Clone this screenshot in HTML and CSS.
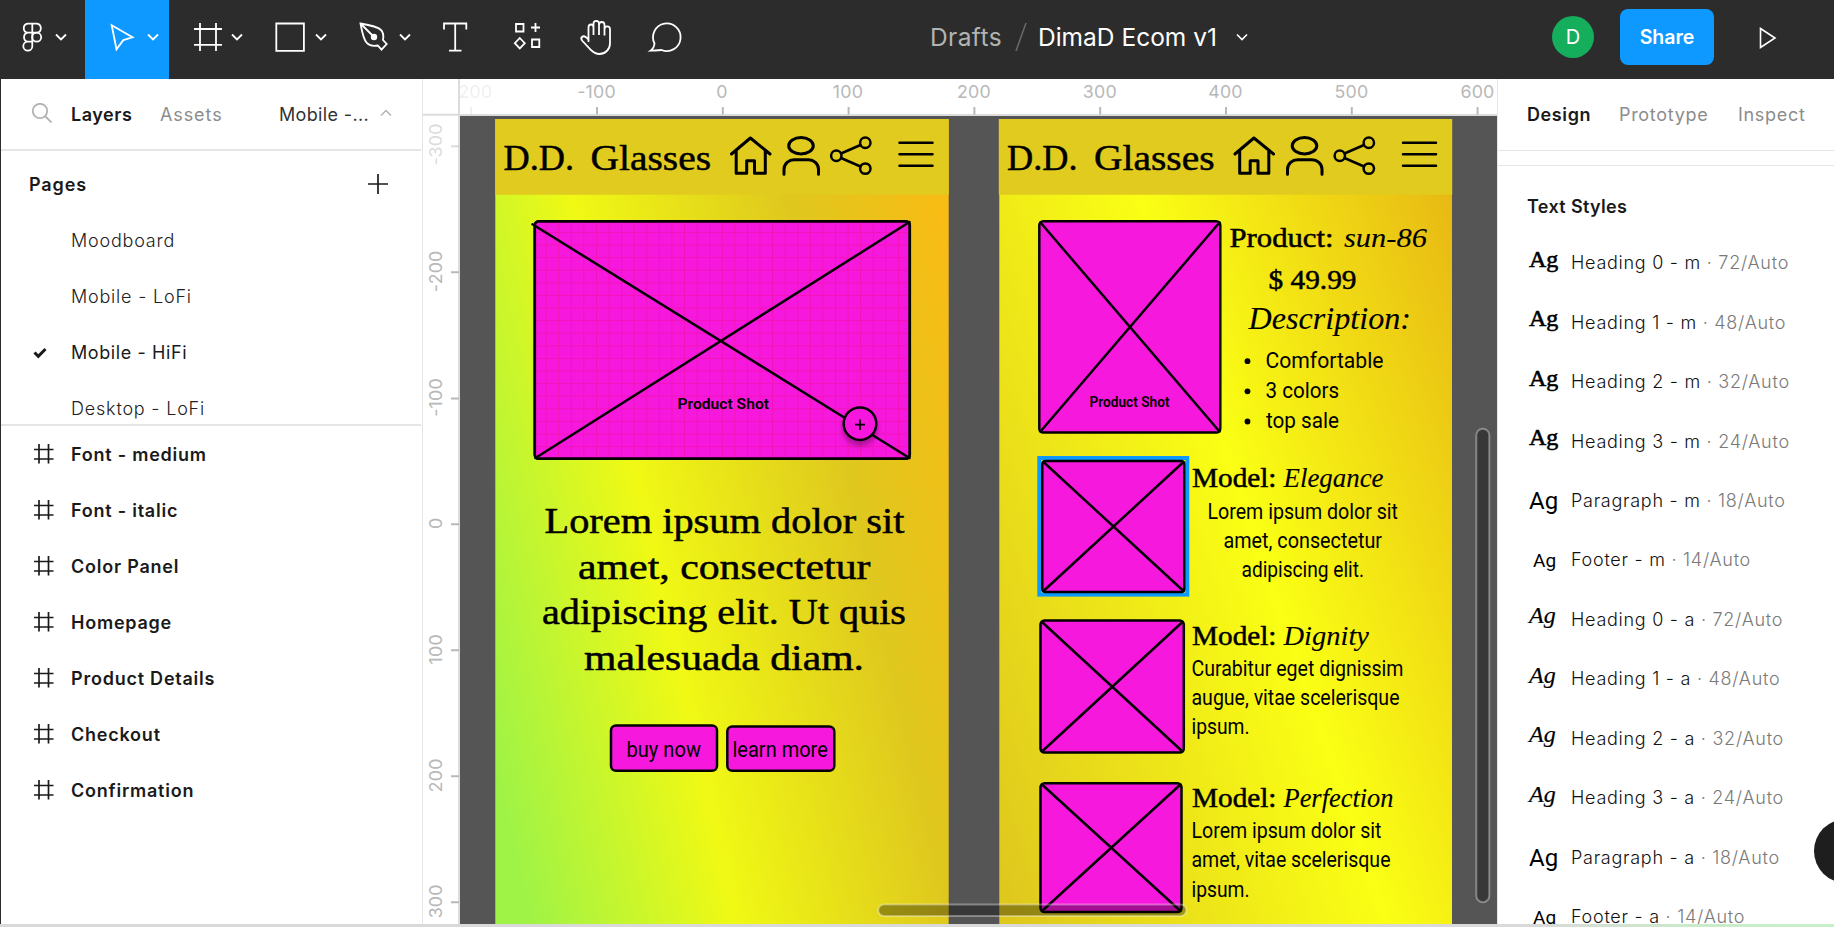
FILE: index.html
```html
<!DOCTYPE html>
<html lang="en">
<head>
<meta charset="utf-8">
<title>DimaD Ecom v1</title>
<link rel="stylesheet" href="styles.css">
</head>
<body>
<div class="app">
  <header class="toolbar">
    <button class="tool w85"><svg viewBox="0 0 85 79"><path d="M32.3 23.6h-4.6a4.6 4.6 0 0 0 0 9.1h4.6zM32.3 23.6h4.6a4.6 4.6 0 0 1 0 9.1h-4.6M32.3 32.7h-4.6a4.6 4.6 0 0 0 0 9h4.6zM32.3 41.7h-4.6a4.5 4.5 0 1 0 4.6 4.5z"/><circle cx="36.7" cy="37.2" r="4.5"/><path d="m56 34.500 5 5 5-5"/></svg></button>
    <button class="tool w84 active"><svg viewBox="85 0 84 79"><path d="m111.700 25.300 20.800 12-9.200 2.800-6.800 9.200z"/><path d="m148 34.500 5 5 5-5"/></svg></button>
    <button class="tool w84"><svg viewBox="169 0 84 79"><path d="M194 29h28M194 44.800h28M200 23v28M216 23v28"/><path d="m232 34.500 5 5 5-5"/></svg></button>
    <button class="tool w84"><svg viewBox="253 0 84 79"><path d="M276.300 23.500h27.600v27.400h-27.600z"/><path d="m316 34.500 5 5 5-5"/></svg></button>
    <button class="tool w84"><svg viewBox="337 0 84 79"><path d="M360.500 23.500c9 1.500 17.500 3.500 20.500 6.500 2.300 2.300 2.800 5.500 2 10l3.700 4-5.200 5.700-3.700-4.200c-5 1-8.300.2-10.800-2.300-3-3-5-11-6.500-19.700zM361 24l12 12"/><circle cx="374" cy="37" r="2.300" class="solid"/><path d="m400 34.500 5 5 5-5"/></svg></button>
    <button class="tool w69"><svg viewBox="421 0 69 79"><path d="M444 29.500v-6h22.300v6M455.200 23.500v27M449 50.700h12.500"/></svg></button>
    <button class="tool w72"><svg viewBox="490 0 72 79"><path d="M516 24h7.500v7.500H516zM535.500 23v9M531 27.500h9M532 39.500h7.300V47H532zM519.800 38l5 5.200-5 5.200-5-5.200z"/></svg></button>
    <button class="tool w69"><svg viewBox="562 0 69 79"><path d="M588.500 42V27.500c0-4 5-4 5 0V35M593.500 35V23.800c0-4 5.500-4 5.500 0V35M599 25c0-4 5.500-4 5.500 0v10.500M604.500 29c0-3.500 5.500-3.500 5.500 0v14.500c0 6-5 10.500-10.500 10.500-4 0-6-1.500-8.500-4l-8.500-9c-3-3.500.5-6 3.500-3.800l2.500 2.300"/></svg></button>
    <button class="tool w70"><svg viewBox="631 0 70 79"><path d="M654.500 43.500a13.800 13.800 0 1 1 7 6.500c-3.500.300-7 .6-11 .7 2.500-1.700 3.700-4.200 4-7.200z"/></svg></button>
    <div class="title"><span class="drafts">Drafts</span><svg class="slash" viewBox="0 0 14 30"><path d="M12 1 2 29"/></svg><span class="file">DimaD Ecom v1</span><svg class="chev" viewBox="0 0 12 8"><path d="m1 1.500 5 5 5-5"/></svg></div>
    <div class="avatar">D</div>
    <button class="share">Share</button>
    <svg class="play" viewBox="0 0 18 22"><path d="M1.500 1.500 16 11 1.500 20.500z"/></svg>
  </header>

  <div class="work">
    <aside class="left">
      <div class="tabs">
        <svg class="search" viewBox="0 0 20 20"><circle cx="8" cy="8" r="7.200"/><path d="m13 13 6.500 6.500"/></svg>
        <b class="t-layers">Layers</b><span class="t-assets">Assets</span><span class="t-page">Mobile -...</span>
        <svg class="up" viewBox="0 0 12 8"><path d="m1 6.500 5-5 5 5"/></svg>
      </div>
      <section class="pages">
        <div class="row head"><b>Pages</b><svg class="plus" viewBox="0 0 20 20"><path d="M0 10h20M10 0v20"/></svg></div>
        <div class="row page">Moodboard</div>
        <div class="row page">Mobile - LoFi</div>
        <div class="row page current"><svg class="check" viewBox="0 0 14 12"><path d="m1.500 5.500 3.800 3.800L12.500 2"/></svg>Mobile - HiFi</div>
        <div class="row page">Desktop - LoFi</div>
      </section>
      <section class="layers">
        <div class="row layer"><svg viewBox="0 0 20 20"><path d="M0 5.500h19.500M0 15h19.500M5 0v19.500M14.500 0v19.500"/></svg>Font - medium</div>
        <div class="row layer"><svg viewBox="0 0 20 20"><path d="M0 5.500h19.500M0 15h19.500M5 0v19.500M14.500 0v19.500"/></svg>Font - italic</div>
        <div class="row layer"><svg viewBox="0 0 20 20"><path d="M0 5.500h19.500M0 15h19.500M5 0v19.500M14.500 0v19.500"/></svg>Color Panel</div>
        <div class="row layer"><svg viewBox="0 0 20 20"><path d="M0 5.500h19.500M0 15h19.500M5 0v19.500M14.500 0v19.500"/></svg>Homepage</div>
        <div class="row layer"><svg viewBox="0 0 20 20"><path d="M0 5.500h19.500M0 15h19.500M5 0v19.500M14.500 0v19.500"/></svg>Product Details</div>
        <div class="row layer"><svg viewBox="0 0 20 20"><path d="M0 5.500h19.500M0 15h19.500M5 0v19.500M14.500 0v19.500"/></svg>Checkout</div>
        <div class="row layer"><svg viewBox="0 0 20 20"><path d="M0 5.500h19.500M0 15h19.500M5 0v19.500M14.500 0v19.500"/></svg>Confirmation</div>
      </section>
    </aside>

    <main class="stage">
      <svg class="ruler-y" viewBox="423 79 37 845">
        <path class="edge" d="M423 114.700h36M459 79v845"/>
        <path class="tick" d="M451 272.300h8M451 398.500h8M451 524.300h8M451 650.300h8M451 776.300h8M451 902.300h8"/>
        <path class="tick faint" d="M451 146.300h8"/>
        <g class="num">
          <text class="faint" transform="translate(442 144.500) rotate(-90)">-300</text>
          <text transform="translate(442 271.300) rotate(-90)">-200</text>
          <text transform="translate(442 397.500) rotate(-90)">-100</text>
          <text transform="translate(442 523.300) rotate(-90)">0</text>
          <text transform="translate(442 649.300) rotate(-90)">100</text>
          <text transform="translate(442 775.300) rotate(-90)">200</text>
          <text transform="translate(442 901.300) rotate(-90)">300</text>
        </g>
      </svg>
      <div class="stage-col">
        <svg class="ruler-x" viewBox="460 79 1037 37">
          <path class="edge" d="M460 115h1037"/>
          <path class="tick" d="M597 107v7.500M722.800 107v7.500M848.600 107v7.500M974.400 107v7.500M1100.200 107v7.500M1226 107v7.500M1351.800 107v7.500M1477.600 107v7.500"/>
          <path class="tick fainter" d="M471 107v7.500"/>
          <g class="num">
            <text class="fainter" x="475.500">200</text>
            <text x="596.500">-100</text><text x="722">0</text><text x="848">100</text><text x="974">200</text><text x="1099.800">300</text><text x="1225.500">400</text><text x="1351.500">500</text><text x="1477.500">600</text>
          </g>
        </svg>
        <svg class="canvas" viewBox="460 116 1037 808">
          <defs>
            <linearGradient id="bg1" gradientUnits="userSpaceOnUse" x1="322" y1="0" x2="874" y2="-124.200">
              <stop offset="0" stop-color="#9ff346"/><stop offset=".355" stop-color="#f0f914"/><stop offset=".725" stop-color="#dfc81e"/><stop offset="1" stop-color="#f9bb14"/>
            </linearGradient>
            <linearGradient id="bg2" gradientUnits="userSpaceOnUse" x1="700" y1="0" x2="1313.600" y2="-209.200">
              <stop offset="0" stop-color="#dfc81e"/><stop offset=".5445" stop-color="#faff14"/><stop offset="1" stop-color="#e8b914"/>
            </linearGradient>
            <pattern id="grid" patternUnits="userSpaceOnUse" x="534" y="220.300" width="12.580" height="12.600"><path d="M12.100 0v12.600M0 12.100h12.580" stroke="#f01090" stroke-width="1" opacity=".5"/></pattern>
            <filter id="soft" x="-50%" y="-50%" width="200%" height="200%"><feDropShadow dx="0" dy="5" stdDeviation="2.500" flood-opacity=".3"/></filter>
            <g id="nav">
              <path class="bar" d="M495.300 119h453.400v75.700H495.300z"/>
              <g class="ln">
                <path d="m731.500 154 18.900-16 19.600 16M736.200 151v22.300h10.500v-12.600h7.800v12.600h10.800V151"/>
                <ellipse cx="801" cy="145.800" rx="12.300" ry="8.200"/><path d="M784 174.300v-5c0-5.500 5-9.600 10-9.600h14.500c5 0 10 4.100 10 9.600v5"/>
                <g class="thin"><circle cx="836.300" cy="155.700" r="5.200"/><circle cx="865.300" cy="142.700" r="5.200"/><circle cx="865.300" cy="168.600" r="5.200"/><path d="m841 153.500 19.500-8.500M841 158l19.500 8.500M899.500 142.700h33M899.500 154.300h33M899.500 165.800h33"/></g>
              </g>
              <text class="h1" x="503.500" y="169.500" textLength="70.500" lengthAdjust="spacingAndGlyphs">D.D.</text>
              <text class="h1" x="590.500" y="169.500" textLength="120.500" lengthAdjust="spacingAndGlyphs">Glasses</text>
            </g>
          </defs>

          <g class="homepage">
            <path d="M495.300 119h453.400v805H495.300z" fill="url(#bg1)"/>
            <use href="#nav"/>
            <rect class="shot" x="534.800" y="221.300" width="375" height="237.500" rx="4"/>
            <rect x="534.800" y="221.300" width="375" height="237.500" fill="url(#grid)"/>
            <rect class="shot-line" x="534.800" y="221.300" width="375" height="237.500" rx="4"/>
            <path class="ln mid" d="M532.500 224.300 909.500 458M535.500 458 909.500 222"/>
            <text class="label" x="677.500" y="409" font-size="15.500" textLength="91.500" lengthAdjust="spacingAndGlyphs">Product Shot</text>
            <circle class="shot" cx="860" cy="423.700" r="16.300" filter="url(#soft)"/>
            <path class="ln plus-sign" d="M855 424.700h10M860 419.500v10.400"/>
            <g class="h1">
              <text x="544.500" y="533" textLength="360" lengthAdjust="spacingAndGlyphs">Lorem ipsum dolor sit</text>
              <text x="578" y="578.700" textLength="292.500" lengthAdjust="spacingAndGlyphs">amet, consectetur</text>
              <text x="542" y="624" textLength="364" lengthAdjust="spacingAndGlyphs">adipiscing elit. Ut quis</text>
              <text x="584" y="669.500" textLength="280" lengthAdjust="spacingAndGlyphs">malesuada diam.</text>
            </g>
            <rect class="shot" x="611" y="725.500" width="106" height="45.300" rx="5"/>
            <rect class="shot" x="727.300" y="726.500" width="107" height="44.300" rx="5"/>
            <text class="p" x="626.500" y="756.500" textLength="74.500" lengthAdjust="spacingAndGlyphs">buy now</text>
            <text class="p" x="732.500" y="756.500" textLength="95.300" lengthAdjust="spacingAndGlyphs">learn more</text>
          </g>

          <g class="details">
            <path d="M999.300 119H1452v805H999.300z" fill="url(#bg2)"/>
            <use href="#nav" x="503.500"/>
            <rect class="shot" x="1039.300" y="221.300" width="181" height="211.300" rx="4"/>
            <path class="ln mid" d="m1040.500 222.500 179 209M1219.500 222.500l-179 209"/>
            <text class="label" x="1089.500" y="406.600" font-size="13.800" textLength="80" lengthAdjust="spacingAndGlyphs">Product Shot</text>
            <text class="h3" x="1229.500" y="247" textLength="104" lengthAdjust="spacingAndGlyphs">Product:</text>
            <text class="h3 it" x="1344" y="247" textLength="83" lengthAdjust="spacingAndGlyphs">sun-86</text>
            <text class="h3" x="1268.500" y="289" textLength="88" lengthAdjust="spacingAndGlyphs">$ 49.99</text>
            <text class="h2 it" x="1248.500" y="329.300" textLength="162.500" lengthAdjust="spacingAndGlyphs">Description:</text>
            <g class="dot"><circle cx="1247.500" cy="361.200" r="2.900"/><circle cx="1247.500" cy="391.300" r="2.900"/><circle cx="1247.500" cy="421.500" r="2.900"/></g>
            <g class="p">
              <text x="1265.500" y="367.500" textLength="118" lengthAdjust="spacingAndGlyphs">Comfortable</text>
              <text x="1265.500" y="397.700" textLength="73.500" lengthAdjust="spacingAndGlyphs">3 colors</text>
              <text x="1266" y="428" textLength="73" lengthAdjust="spacingAndGlyphs">top sale</text>
            </g>

            <rect class="selected" x="1039.300" y="458" width="148" height="136.600"/>
            <rect class="shot" x="1042.300" y="461" width="142" height="131" rx="3"/>
            <path class="ln mid" d="m1043.500 462 140 129M1183.500 462l-140 129"/>
            <text class="h3" x="1192" y="487" textLength="84.500" lengthAdjust="spacingAndGlyphs">Model:</text>
            <text class="h3 it" x="1283.500" y="487" textLength="100" lengthAdjust="spacingAndGlyphs">Elegance</text>
            <g class="p">
              <text x="1207.500" y="518.500" textLength="190.500" lengthAdjust="spacingAndGlyphs">Lorem ipsum dolor sit</text>
              <text x="1223.500" y="547.500" textLength="158.500" lengthAdjust="spacingAndGlyphs">amet, consectetur</text>
              <text x="1241.500" y="576.500" textLength="122.500" lengthAdjust="spacingAndGlyphs">adipiscing elit.</text>
            </g>

            <rect class="shot" x="1040.500" y="620.500" width="143.300" height="132" rx="4"/>
            <path class="ln mid" d="m1042 622 140.500 129.500M1182.500 622 1042 751.500"/>
            <text class="h3" x="1192" y="644.700" textLength="84.500" lengthAdjust="spacingAndGlyphs">Model:</text>
            <text class="h3 it" x="1283.500" y="644.700" textLength="85.500" lengthAdjust="spacingAndGlyphs">Dignity</text>
            <g class="p">
              <text x="1191.500" y="675.700" textLength="212" lengthAdjust="spacingAndGlyphs">Curabitur eget dignissim</text>
              <text x="1191.500" y="705" textLength="208" lengthAdjust="spacingAndGlyphs">augue, vitae scelerisque</text>
              <text x="1191.500" y="734" textLength="58" lengthAdjust="spacingAndGlyphs">ipsum.</text>
            </g>

            <rect class="shot" x="1040.500" y="783.300" width="141" height="128.800" rx="4"/>
            <path class="ln mid" d="m1042 784.500 138.500 126.500M1180.500 784.500 1042 911"/>
            <text class="h3" x="1192" y="807" textLength="84.500" lengthAdjust="spacingAndGlyphs">Model:</text>
            <text class="h3 it" x="1283.500" y="807" textLength="110" lengthAdjust="spacingAndGlyphs">Perfection</text>
            <g class="p">
              <text x="1191.500" y="838.300" textLength="190" lengthAdjust="spacingAndGlyphs">Lorem ipsum dolor sit</text>
              <text x="1191.500" y="867.300" textLength="199" lengthAdjust="spacingAndGlyphs">amet, vitae scelerisque</text>
              <text x="1191.500" y="896.600" textLength="58" lengthAdjust="spacingAndGlyphs">ipsum.</text>
            </g>
          </g>

          <rect class="scroll" x="878.300" y="904.500" width="308" height="11.500" rx="5.750"/>
          <rect class="scroll" x="1476.300" y="428.700" width="13" height="473.500" rx="6.500"/>
        </svg>
      </div>
    </main>

    <aside class="right">
      <div class="rtabs"><b>Design</b><span class="proto">Prototype</span><span>Inspect</span></div>
      <div class="band"></div>
      <h2>Text Styles</h2>
      <ul>
        <li><i class="ag m">Ag</i><span>Heading 0 - m <em>· 72/Auto</em></span></li>
        <li><i class="ag m">Ag</i><span>Heading 1 - m <em>· 48/Auto</em></span></li>
        <li><i class="ag m">Ag</i><span>Heading 2 - m <em>· 32/Auto</em></span></li>
        <li><i class="ag m">Ag</i><span>Heading 3 - m <em>· 24/Auto</em></span></li>
        <li><i class="ag d">Ag</i><span>Paragraph - m <em>· 18/Auto</em></span></li>
        <li><i class="ag f">Ag</i><span>Footer - m <em>· 14/Auto</em></span></li>
        <li><i class="ag a">Ag</i><span>Heading 0 - a <em>· 72/Auto</em></span></li>
        <li><i class="ag a">Ag</i><span>Heading 1 - a <em>· 48/Auto</em></span></li>
        <li><i class="ag a">Ag</i><span>Heading 2 - a <em>· 32/Auto</em></span></li>
        <li><i class="ag a">Ag</i><span>Heading 3 - a <em>· 24/Auto</em></span></li>
        <li><i class="ag d">Ag</i><span>Paragraph - a <em>· 18/Auto</em></span></li>
        <li><i class="ag f">Ag</i><span>Footer - a <em>· 14/Auto</em></span></li>
      </ul>
      <div class="help"></div>
    </aside>
  </div>
  <div class="bottom"></div>
</div>
</body>
</html>
```
FILE: styles.css
```css
* { box-sizing: border-box; }
body { margin: 0; font-family: Inter, sans-serif; font-size: 18px; letter-spacing: .7px; color: #1a1a1a; background: #fff; overflow: hidden; }
svg { display: block; fill: none; flex: none; }
b { font-weight: 600; }
.app { width: 1834px; height: 927px; display: flex; flex-direction: column; }

/* Toolbar */
.toolbar { height: 79px; flex: none; display: flex; align-items: center; background: #2c2c2c; color: #fff; }
.tool { height: 79px; padding: 0; border: 0; background: none; flex: none; }
.tool svg { width: 100%; height: 79px; stroke: #fff; stroke-width: 1.8; }
.tool .solid { fill: #fff; }
.tool.active { background: #0d99ff; }
.w85 { width: 85px; }
.w84 { width: 84px; }
.w72 { width: 72px; }
.w70 { width: 70px; }
.w69 { width: 69px; }
.title { width: 851px; padding-left: 229px; display: flex; align-items: center; font-size: 24.5px; letter-spacing: 0; height: 74px; margin-bottom: 5px; }
.drafts { width: 84px; color: #b3b3b3; letter-spacing: .4px; }
.slash { width: 14px; height: 30px; stroke: #6a6a6a; stroke-width: 1.5; }
.file { margin-left: 10px; width: 198px; white-space: nowrap; }
.chev { width: 12px; height: 8px; stroke: #fff; stroke-width: 1.6; }
.avatar { width: 42px; height: 42px; border-radius: 50%; background: #14ae5c; font-size: 20px; letter-spacing: 0; display: flex; align-items: center; justify-content: center; margin-bottom: 5px; }
.share { margin: 0 45px 5px 26px; width: 94px; height: 56px; border: 0; border-radius: 8px; background: #0d99ff; color: #fff; font: 600 19.5px Inter, sans-serif; padding: 0; }
.play { width: 18px; height: 22px; stroke: #fff; stroke-width: 1.6; margin-bottom: 4px; }

.work { flex: 1; min-height: 0; display: flex; }

/* Left panel */
.left { width: 423px; border-left: 1px solid #2c2c2c; border-right: 1px solid #e5e5e5; }
.tabs { height: 72px; border-bottom: 2px solid #e5e5e5; margin-right: 1px; display: flex; align-items: center; padding-left: 31px; }
.search { width: 20px; height: 20px; stroke: #b3b3b3; stroke-width: 1.8; margin-bottom: 2px; }
.t-layers { margin-left: 19px; width: 89px; letter-spacing: .55px; }
.t-assets { width: 119px; color: #8c8c8c; letter-spacing: .9px; }
.t-page { width: 101px; color: #333; letter-spacing: .35px; }
.up { width: 12px; height: 8px; stroke: #b3b3b3; stroke-width: 1.5; margin-bottom: 2px; }
.row { height: 56px; display: flex; align-items: center; padding-left: 70px; }
.pages { height: 275px; overflow: hidden; border-bottom: 2px solid #e5e5e5; margin-right: 1px; padding-top: 5.5px; }
.head { padding: 0 33px 0 28px; justify-content: space-between; letter-spacing: .9px; }
.plus { width: 20px; height: 20px; stroke: #1a1a1a; stroke-width: 1.7; margin-bottom: 2px; }
.page { color: #222; font-weight: 300; letter-spacing: .8px; }
.page.current { padding-left: 32px; color: #1a1a1a; font-weight: 400; letter-spacing: .6px; }
.check { width: 14px; height: 12px; margin-right: 24px; stroke: #1a1a1a; stroke-width: 3; }
.layer { padding-left: 33px; gap: 17px; font-weight: 600; letter-spacing: .77px; }
.layer svg { width: 20px; height: 20px; stroke: #1a1a1a; stroke-width: 1.7; }

/* Stage */
.stage { width: 1074px; display: flex; }
.stage-col { width: 1037px; }
.ruler-y { width: 37px; height: 845px; }
.ruler-x { width: 1037px; height: 37px; background: #fff; }
.edge { stroke: #dcdcdc; stroke-width: 2; }
.tick { stroke: #b8b8b8; stroke-width: 2; }
.num text { fill: #b8b8b8; font-size: 17.8px; letter-spacing: .2px; text-anchor: middle; }
.ruler-x text { transform: translateY(97.7px); }
.faint, .num text.faint { opacity: .5; }
.fainter, .num text.fainter { opacity: .22; }
.canvas { width: 1037px; height: 808px; background: #555; }
.canvas text { fill: #000; letter-spacing: 0; }
.bar { fill: #e1cb1e; }
.ln { stroke: #000; stroke-width: 3; fill: none; stroke-linejoin: round; stroke-linecap: round; }
.ln.mid { stroke-width: 2.5; }
.thin { stroke-width: 2.5; }
.ln.plus-sign { stroke-width: 1.7; stroke-linecap: butt; }
.shot { fill: #f718de; stroke: #000; stroke-width: 2.5; }
.shot-line { stroke: #000; stroke-width: 2.5; }
.selected { stroke: #0d99ff; stroke-width: 4; }
.h1, .h2, .h3 { font-family: "Liberation Serif", serif; stroke: #000; stroke-width: .5px; }
.h1 { font-size: 36px; }
.h2 { font-size: 32.5px; stroke-width: .1px; }
.h3 { font-size: 26.5px; }
.it { font-style: italic; stroke-width: .1px; }
.p { font-family: Roboto, sans-serif; font-size: 22.8px; }
.label { font-family: Roboto, sans-serif; font-weight: 600; }
.dot { fill: #000; }
.scroll { fill: #000; fill-opacity: .34; stroke: #fff; stroke-opacity: .35; stroke-width: 2; }

/* Right panel */
.right { width: 337px; border-left: 1px solid #e5e5e5; position: relative; overflow: hidden; }
.rtabs { height: 72px; display: flex; align-items: center; padding-left: 29px; border-bottom: 1px solid #e5e5e5; white-space: nowrap; color: #8c8c8c; }
.rtabs b { color: #1a1a1a; width: 92px; letter-spacing: .6px; }
.proto { width: 119px; }
.band { height: 15px; border-bottom: 1px solid #e5e5e5; }
h2 { margin: 27px 0 12px 29px; font-size: 18px; line-height: 28px; font-weight: 600; letter-spacing: .35px; }
ul { margin: 0; padding: 0 0 0 30px; list-style: none; }
li { height: 59.45px; display: flex; align-items: center; font-weight: 300; white-space: nowrap; letter-spacing: .73px; color: #111; }
li em { font-style: normal; color: #7a7a7a; }
.ag { width: 43px; height: 34px; padding-left: 1px; color: #000; letter-spacing: 0; font-style: normal; }
.m, .a { font: 400 24px/27px "Liberation Serif", serif; -webkit-text-stroke: .6px #000; }
.a { font-style: italic; -webkit-text-stroke: .2px #000; }
.d { font: 400 24px/36px Roboto, sans-serif; }
.f { font: 400 19px/35px Roboto, sans-serif; padding-left: 5px; }
.help { position: absolute; left: 316px; top: 740px; width: 64px; height: 64px; border-radius: 50%; background: #1e1e1e; }

.bottom { height: 3px; background: linear-gradient(90deg, #d9d9d9 84%, #c8ecc8 93%, #c8f0c8); }
```
